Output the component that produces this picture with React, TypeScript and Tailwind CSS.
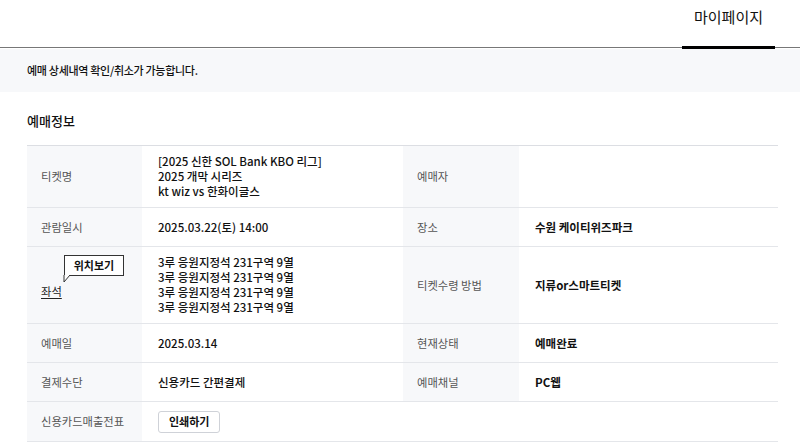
const font = { fontFamily: '"Noto Sans CJK KR", "Noto Sans", sans-serif' };

function Label({ children }: { children: React.ReactNode }) {
  return (
    <div className="flex items-center bg-[#f7f8fa] pl-[14px] py-2 min-h-[39px] text-[11.3px] text-[#555] border-b border-[#e4e6ea]">
      {children}
    </div>
  );
}

function Value({ children, bold = false }: { children?: React.ReactNode; bold?: boolean }) {
  return (
    <div
      className={`flex items-center pl-4 py-2 min-h-[39px] text-[11.5px] leading-[15px] text-[#111] border-b border-[#e4e6ea] ${
        bold ? 'font-bold' : 'font-medium'
      }`}
    >
      {children}
    </div>
  );
}

function Lines({ items }: { items: string[] }) {
  return (
    <div className="flex flex-col">
      {items.map((t, i) => (
        <div key={i} className="h-[15px] leading-[15px] whitespace-nowrap">
          {t}
        </div>
      ))}
    </div>
  );
}

export default function App() {
  const seat = '3루 응원지정석 231구역 9열';
  return (
    <div className="w-[800px] h-[448px] overflow-hidden bg-white" style={font}>
      {/* top nav */}
      <div className="h-[48px] flex justify-end border-b border-[#777] relative">
        <div className="w-[93px] mr-[25px] flex justify-center pt-[6px] relative">
          <span className="text-[15px] text-[#111]">마이페이지</span>
          <div className="absolute left-0 right-0 bottom-[-2px] h-[3px] bg-black" />
        </div>
      </div>

      {/* notice */}
      <div className="h-[43px] bg-[#f7f8fa] flex items-center pl-[27px] mt-[1px]">
        <p className="text-[11px] font-medium text-[#111] tracking-[-0.3px]">예매 상세내역 확인/취소가 가능합니다.</p>
      </div>

      <div className="px-[27px] pr-[22px]">
        <h2 className="text-[13px] font-medium text-[#111] pt-[19px] pb-[15px] leading-[19px]">예매정보</h2>

        <div className="grid grid-cols-[115px_261px_116px_259px] border-t border-[#dcdee3]">
          <Label>티켓명</Label>
          <Value>
            <Lines items={['[2025 신한 SOL Bank KBO 리그]', '2025 개막 시리즈', 'kt wiz vs 한화이글스']} />
          </Value>
          <Label>예매자</Label>
          <Value bold />

          <Label>관람일시</Label>
          <Value>2025.03.22(토) 14:00</Value>
          <Label>장소</Label>
          <Value bold>수원 케이티위즈파크</Value>

          <Label>
            <div className="relative pt-[12px]">
              <span className="underline underline-offset-2 text-[#222]">좌석</span>
              <div className="absolute left-[23px] top-[-16px] w-[60px] h-[21px] border border-[#333] bg-white flex items-center justify-center text-[11px] font-bold text-[#111] whitespace-nowrap">
                위치보기
              </div>
              <svg className="absolute left-[22px] top-[4px]" width="8" height="8" viewBox="0 0 8 8">
                <path d="M1 0 L1 7 L7 0" fill="white" stroke="#333" strokeWidth="1" />
              </svg>
            </div>
          </Label>
          <Value>
            <Lines items={[seat, seat, seat, seat]} />
          </Value>
          <Label>티켓수령 방법</Label>
          <Value bold>지류or스마트티켓</Value>

          <Label>예매일</Label>
          <Value>2025.03.14</Value>
          <Label>현재상태</Label>
          <Value bold>예매완료</Value>

          <Label>결제수단</Label>
          <Value>신용카드 간편결제</Value>
          <Label>예매채널</Label>
          <Value bold>PC웹</Value>

          <Label>신용카드매출전표</Label>
          <div className="col-span-3 flex items-center pl-4 min-h-[40px] border-b border-[#e4e6ea]">
            <button className="h-[22px] px-[10px] border border-[#cfd2d8] rounded-[3px] bg-white text-[11px] font-bold text-[#111]">
              인쇄하기
            </button>
          </div>
        </div>
      </div>
    </div>
  );
}
